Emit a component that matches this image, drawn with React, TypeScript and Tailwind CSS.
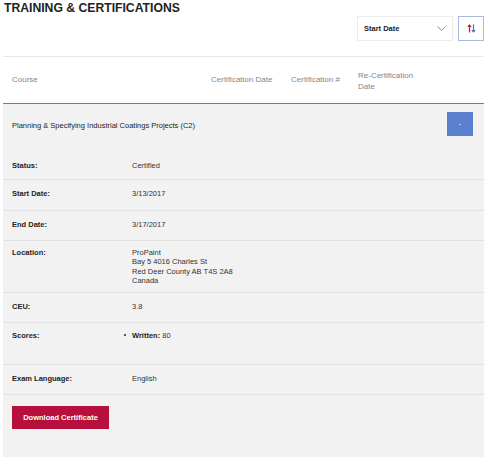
import React from "react"

const rows: Array<{ label: string; h: string; pt: string; value: React.ReactNode }> = [
  { label: "Status:", h: "h-[30px]", pt: "pt-[11px]", value: "Certified" },
  { label: "Start Date:", h: "h-[31px]", pt: "pt-[9px]", value: "3/13/2017" },
  { label: "End Date:", h: "h-[30px]", pt: "pt-[9px]", value: "3/17/2017" },
  {
    label: "Location:",
    h: "h-[52px]",
    pt: "pt-[7px]",
    value: (
      <>
        <div>ProPaint</div>
        <div>Bay 5 4016 Charles St</div>
        <div>Red Deer County AB T4S 2A8</div>
        <div>Canada</div>
      </>
    ),
  },
  { label: "CEU:", h: "h-[30px]", pt: "pt-[9px]", value: "3.8" },
  {
    label: "Scores:",
    h: "h-[42px]",
    pt: "pt-[8px]",
    value: (
      <div className="relative">
        <span className="absolute left-[-8px] top-[3.5px] w-[2px] h-[2px] rounded-full bg-[#222]" />
        <span className="font-bold text-[#222]">Written:</span> 80
      </div>
    ),
  },
  { label: "Exam Language:", h: "h-[30px]", pt: "pt-[9px]", value: "English" },
]

const SortIcon = () => (
  <svg width="9" height="9" viewBox="0 0 9 9" fill="none">
    <path d="M2.5 8.5V1M0.8 2.8L2.5 1L4.2 2.8" stroke="#c8163f" strokeWidth="1.2" />
    <path d="M6.5 0.5V8M4.8 6.2L6.5 8L8.2 6.2" stroke="#4f6fc2" strokeWidth="1.2" />
  </svg>
)

const Chevron = () => (
  <svg width="9" height="5" viewBox="0 0 9 5" fill="none">
    <path d="M0.5 0.5L4.5 4.3L8.5 0.5" stroke="#7088c8" strokeWidth="1" />
  </svg>
)

export default function App() {
  return (
    <div className="w-[488px] h-[464px] overflow-hidden bg-white font-['Liberation_Sans',Arial,sans-serif] text-[#333]">
      <div className="ml-[3px] w-[481px]">
        {/* heading + sort controls */}
        <div className="h-[57px] border-b border-[#e8e8e8] flex justify-between">
          <h1 className="pl-[1px] pt-[1px] text-[12.2px] leading-[14px] font-bold text-[#222]">
            TRAINING &amp; CERTIFICATIONS
          </h1>
          <div className="flex gap-[5px] pt-[16px]">
            <div className="w-[96px] h-[25px] border border-[#ececec] flex items-center justify-between pl-[6px] pr-[6px]">
              <span className="text-[7.5px] font-bold text-[#222]">Start Date</span>
              <Chevron />
            </div>
            <button className="w-[26px] h-[25px] border border-[#a9b9e2] flex items-center justify-center">
              <SortIcon />
            </button>
          </div>
        </div>

        {/* table header */}
        <div className="h-[46.5px] border-b-[1.5px] border-[#7b7b7b] flex items-center text-[8px] leading-[11px] text-[#858585]">
          <div className="w-[208px] pl-[9px]">Course</div>
          <div className="w-[80px]">Certification Date</div>
          <div className="w-[67px]">Certification #</div>
          <div className="w-[60px] pt-[2px]">Re-Certification Date</div>
        </div>

        {/* course row + details */}
        <div className="bg-[#f2f2f2] pb-[8px]">
          <div className="h-[46px] flex justify-between pl-[9px] pr-[11px]">
            <div className="pt-[17px] text-[7.5px] leading-[10px] text-[#222]">
              Planning &amp; Specifying Industrial Coatings Projects (C2)
            </div>
            <button className="mt-[8px] w-[26px] h-[24px] bg-[#5b80d0] text-white text-[7px] leading-none">
              -
            </button>
          </div>

          {rows.map((row, i) => (
            <div
              key={i}
              className={`${row.h} ${row.pt} border-b border-[#e2e2e2] flex pl-[9px] text-[7.5px] leading-[9.5px]`}
            >
              <div className="w-[120px] font-bold text-[#222]">{row.label}</div>
              <div className="text-[#333]">{row.value}</div>
            </div>
          ))}

          <div className="pl-[9px] pt-[8px] h-[54px]">
            <button className="w-[97px] h-[23px] bg-[#b8103d] text-white text-[7.5px] font-bold">
              Download Certificate
            </button>
          </div>
        </div>
      </div>
    </div>
  )
}
